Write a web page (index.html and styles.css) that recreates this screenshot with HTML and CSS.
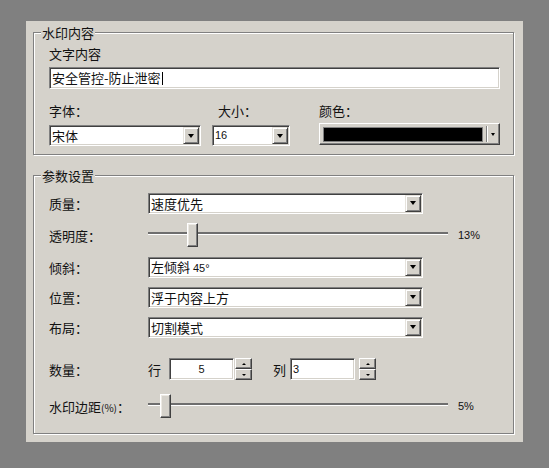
FILE: index.html
```html
<!DOCTYPE html>
<html lang="zh-CN">
<head>
<meta charset="utf-8">
<title>水印设置</title>
<link rel="stylesheet" href="styles.css">
</head>
<body>
<div class="panel">
  <fieldset class="group g1">
    <legend>水印内容</legend>
    <div class="lbl cap">文字内容</div>
    <div class="textbox"><span>安全管控-防止泄密</span><span class="caret"></span></div>
    <div class="fontgrid">
      <div class="lbl">字体：</div>
      <div class="lbl size-lbl">大小：</div>
      <div class="lbl">颜色：</div>
      <div class="combo w-font"><span class="val">宋体</span><span class="dd"><i class="tri"></i></span></div>
      <div class="combo w-size"><span class="val num">16</span><span class="dd"><i class="tri"></i></span></div>
      <div class="colorbox"><span class="swatch"></span><span class="sep"></span><i class="tri small"></i></div>
    </div>
  </fieldset>

  <fieldset class="group g2">
    <legend>参数设置</legend>
    <div class="row">
      <div class="rl">质量：</div>
      <div class="combo wide"><span class="val">速度优先</span><span class="dd"><i class="tri"></i></span></div>
    </div>
    <div class="row r34">
      <div class="rl">透明度：</div>
      <div class="slider"><div class="track"></div><div class="thumb" style="left:39px"></div></div>
      <div class="pct">13%</div>
    </div>
    <div class="row">
      <div class="rl">倾斜：</div>
      <div class="combo wide"><span class="val">左倾斜 <span class="num">45°</span></span><span class="dd"><i class="tri"></i></span></div>
    </div>
    <div class="row">
      <div class="rl">位置：</div>
      <div class="combo wide"><span class="val">浮于内容上方</span><span class="dd"><i class="tri"></i></span></div>
    </div>
    <div class="row">
      <div class="rl">布局：</div>
      <div class="combo wide"><span class="val">切割模式</span><span class="dd"><i class="tri"></i></span></div>
    </div>
    <div class="row mt12">
      <div class="rl">数量：</div>
      <span class="unit">行</span>
      <div class="spin"><div class="spin-in center num">5</div><div class="spin-btns gap1"><span class="sb"><i class="tri up"></i></span><span class="sb"><i class="tri dn"></i></span></div></div>
      <span class="unit u2">列</span>
      <div class="spin"><div class="spin-in num">3</div><div class="spin-btns gap4"><span class="sb"><i class="tri up"></i></span><span class="sb"><i class="tri dn"></i></span></div></div>
    </div>
    <div class="row mt7">
      <div class="rl">水印边距<span class="small">(%)</span>：</div>
      <div class="slider"><div class="track"></div><div class="thumb" style="left:12px"></div></div>
      <div class="pct">5%</div>
    </div>
  </fieldset>
</div>
</body>
</html>
```

FILE: styles.css
```css
html, body {
  margin: 0;
  padding: 0;
}
body {
  width: 549px;
  height: 468px;
  overflow: hidden;
  background: #808080;
  font-family: "Noto Sans CJK SC", "Noto Sans", sans-serif;
  font-size: 13px;
  color: #111;
}
.panel {
  margin: 21px 0 0 26px;
  width: 497px;
  height: 421px;
  box-sizing: border-box;
  padding: 4px 0 0 7px;
  background: #d5d2cb;
}
.group {
  margin: 0;
  width: 481px;
  min-width: 0;
  box-sizing: border-box;
  border: 1px solid #808080;
  box-shadow: inset 1px 1px 0 #fff, 1px 1px 0 #fff;
  padding: 0 13px 8px 15px;
}
.g2 {
  margin-top: 13px;
  padding: 5px 13px 12px 15px;
}
legend {
  margin-left: -8px;
  padding: 0 1px;
  line-height: 15px;
  height: 15px;
  background: #d5d2cb;
}
.lbl {
  line-height: 15px;
  height: 15px;
}
.cap {
  margin-top: 6px;
}
.textbox {
  margin-top: 6px;
  width: 451px;
  height: 22px;
  box-sizing: border-box;
  background: #fff;
  border: 1px solid;
  border-color: #808080 #fff #fff #808080;
  box-shadow: inset 1px 1px 0 #404040, inset -1px -1px 0 #d5d2cb;
  padding: 0 2px 0 2px;
  display: flex;
  align-items: center;
  line-height: 18px;
}
.caret {
  width: 1px;
  height: 13px;
  background: #000;
  margin-left: 1px;
}
.fontgrid {
  margin-top: 14px;
  display: grid;
  grid-template-columns: 163px 107px 181px;
  grid-template-rows: 15px 21px;
  row-gap: 7px;
  align-items: start;
}
.size-lbl {
  margin-left: 6px;
}
.w-font {
  width: 152px;
}
.w-size {
  width: 78px;
}
.combo {
  height: 21px;
  box-sizing: border-box;
  background: #fff;
  border: 1px solid;
  border-color: #808080 #fff #fff #808080;
  box-shadow: inset 1px 1px 0 #404040, inset -1px -1px 0 #d5d2cb;
  padding: 1px 1px 1px 2px;
  display: flex;
  align-items: center;
}
.combo.wide {
  width: 275px;
}
.val {
  flex: 1;
  line-height: 17px;
  white-space: nowrap;
  overflow: hidden;
}
.num {
  font-family: "Liberation Sans", Arial, sans-serif;
  font-size: 11px;
}
.dd {
  width: 16px;
  height: 17px;
  box-sizing: border-box;
  background: #d5d2cb;
  border: 1px solid;
  border-color: #e6e3dd #404040 #404040 #e6e3dd;
  box-shadow: inset 1px 1px 0 #fff, inset -1px -1px 0 #808080;
  display: flex;
  align-items: center;
  justify-content: center;
}
.tri {
  display: block;
  width: 0;
  height: 0;
  border-left: 3.5px solid transparent;
  border-right: 3.5px solid transparent;
  border-top: 4px solid #000;
}
.tri.small {
  border-left-width: 2.5px;
  border-right-width: 2.5px;
  border-top-width: 3px;
}
.tri.up {
  border-left-width: 2px;
  border-right-width: 2px;
  border-top: 0;
  border-bottom: 2px solid #000;
}
.tri.dn {
  border-left-width: 2px;
  border-right-width: 2px;
  border-top-width: 2px;
}
.colorbox {
  width: 181px;
  height: 22px;
  margin-top: -2px;
  box-sizing: border-box;
  background: #d5d2cb;
  border: 1px solid;
  border-color: #fff #404040 #404040 #fff;
  box-shadow: inset -1px -1px 0 #808080;
  padding: 3px 4px 3px 3px;
  display: flex;
  align-items: center;
}
.swatch {
  flex: 1;
  height: 15px;
  background: #000;
  border: 1px solid #808080;
  box-sizing: border-box;
}
.sep {
  width: 1px;
  height: 16px;
  background: #808080;
  border-right: 1px solid #fff;
  margin: 0 3px 0 3px;
}
.row {
  height: 30px;
  display: flex;
  align-items: center;
}
.r34 {
  height: 34px;
}
.mt12 {
  margin-top: 12px;
}
.mt7 {
  margin-top: 7px;
}
.rl {
  width: 99px;
  flex: none;
  white-space: nowrap;
}
.small {
  font-size: 10px;
}
.slider {
  position: relative;
  width: 300px;
  height: 24px;
}
.track {
  margin-top: 9px;
  height: 2px;
  background: #6e6e6e;
  border-bottom: 1px solid #fff;
}
.thumb {
  position: absolute;
  top: 0;
  width: 11px;
  height: 24px;
  box-sizing: border-box;
  background: #d5d2cb;
  border: 1px solid;
  border-color: #fff #404040 #404040 #fff;
  box-shadow: inset -1px -1px 0 #808080, inset 1px 1px 0 #ece9e3;
}
.pct {
  margin-left: 10px;
  font-family: "Liberation Sans", Arial, sans-serif;
  font-size: 11px;
}
.unit {
  margin-right: 8px;
}
.u2 {
  margin-left: 21px;
  margin-right: 4px;
}
.spin {
  display: flex;
  align-items: center;
}
.spin-in {
  width: 65px;
  height: 22px;
  box-sizing: border-box;
  background: #fff;
  border: 1px solid;
  border-color: #808080 #fff #fff #808080;
  box-shadow: inset 1px 1px 0 #404040, inset -1px -1px 0 #d5d2cb;
  padding: 0 2px;
  line-height: 20px;
}
.spin-in.center {
  text-align: center;
}
.spin-btns {
  display: flex;
  flex-direction: column;
  width: 17px;
  height: 22px;
}
.gap1 {
  margin-left: 1px;
}
.gap4 {
  margin-left: 4px;
}
.sb {
  flex: 1;
  box-sizing: border-box;
  background: #d5d2cb;
  border: 1px solid;
  border-color: #fff #404040 #404040 #fff;
  box-shadow: inset -1px -1px 0 #808080;
  display: flex;
  align-items: center;
  justify-content: center;
}
```
